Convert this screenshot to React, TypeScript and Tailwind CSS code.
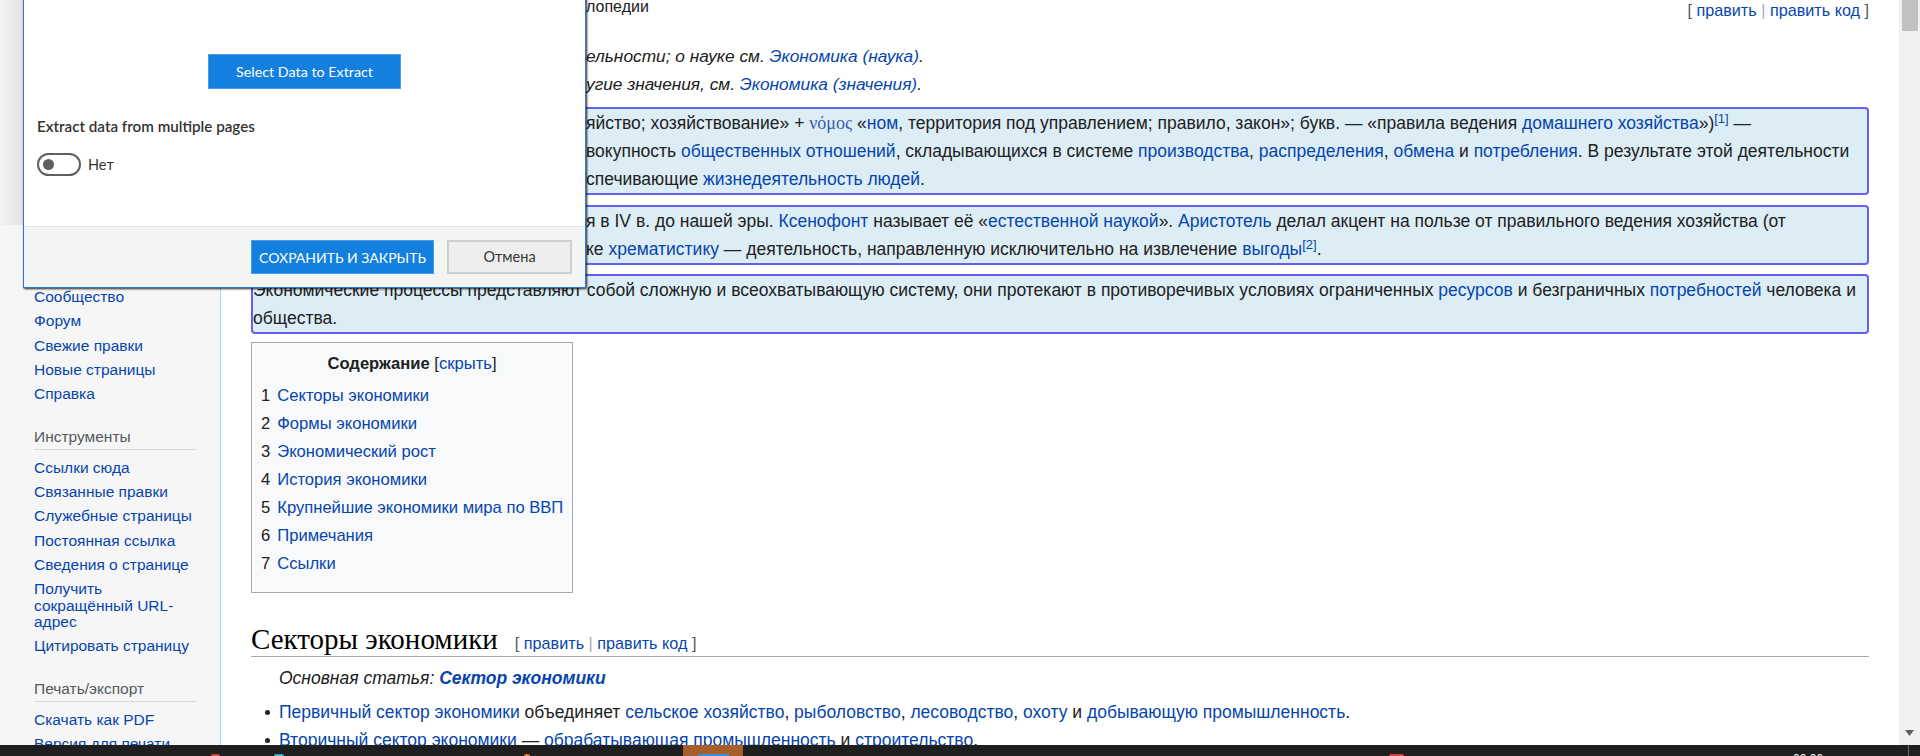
import React from "react";

const L = "text-[#0645ad]";

function Clip({ prefix, w, children }: { prefix: string; w: string; children: React.ReactNode }) {
  return (
    <div className="flex whitespace-nowrap">
      <span className={`${w} shrink-0 overflow-hidden`}>{prefix}</span>
      <span>{children}</span>
    </div>
  );
}

function SideItem({ children }: { children: React.ReactNode }) {
  return <div className="py-[4px] text-[#0645ad]">{children}</div>;
}

function SideHeading({ children }: { children: React.ReactNode }) {
  return (
    <div className="mt-[23px] mb-[6px] border-b border-[#d5d8dc] pb-[3px] text-[#54595d]">{children}</div>
  );
}

function Sidebar() {
  return (
    <aside className="w-[220px] shrink-0 bg-[#f6f6f6] pl-[34px] pr-[23px] pt-[285px] text-[15.5px] leading-[16.3px]">
      <SideItem>Сообщество</SideItem>
      <SideItem>Форум</SideItem>
      <SideItem>Свежие правки</SideItem>
      <SideItem>Новые страницы</SideItem>
      <SideItem>Справка</SideItem>
      <SideHeading>Инструменты</SideHeading>
      <SideItem>Ссылки сюда</SideItem>
      <SideItem>Связанные правки</SideItem>
      <SideItem>Служебные страницы</SideItem>
      <SideItem>Постоянная ссылка</SideItem>
      <SideItem>Сведения о странице</SideItem>
      <SideItem>
        Получить
        <br />
        сокращённый URL-
        <br />
        адрес
      </SideItem>
      <SideItem>Цитировать страницу</SideItem>
      <SideHeading>Печать/экспорт</SideHeading>
      <SideItem>Скачать как PDF</SideItem>
      <SideItem>Версия для печати</SideItem>
    </aside>
  );
}

function EditLinks() {
  return (
    <span className="text-[16.2px] text-[#54595d]">
      [ <span className={L}>править</span> <span className="text-[#a2a9b1]">|</span>{" "}
      <span className={L}>править код</span> ]
    </span>
  );
}

function Content() {
  return (
    <main className="min-w-0 flex-1 border-l border-[#a7d7f9] bg-white px-[30px] text-[17.5px] leading-[28px]">
      <div className="flex h-[20px] items-start justify-between">
        <div className="mt-[-1px] text-[16px] leading-[16px]">
          <Clip prefix="Материал из Википедии — свободной энцик" w="w-[335px]">
            лопедии
          </Clip>
        </div>
        <div className="leading-[20px]">
          <EditLinks />
        </div>
      </div>

      <div className="mt-[22px] pl-[28px] text-[17.3px] italic">
        <Clip prefix="Эта статья — о виде хозяйственной деят" w="w-[307px]">
          ельности; о науке см. <span className={L}>Экономика (наука)</span>.
        </Clip>
        <Clip prefix="У этого термина существуют и др" w="w-[307px]">
          угие значения, см. <span className={L}>Экономика (значения)</span>.
        </Clip>
      </div>

      <div className="mt-[9px] rounded-[4px] border-2 border-[#6262ef] bg-[#ddedf5]">
        <Clip prefix="Эконо́мика (от др.-греч. οἶκος «дом, хозя" w="w-[333px]">
          яйство; хозяйствование» +{" "}
          <span className="font-['Liberation_Serif',serif] text-[18px] text-[#3a5cae]">νόμος</span> «
          <span className={L}>ном</span>, территория под управлением; правило, закон»; букв. — «правила ведения{" "}
          <span className={L}>домашнего хозяйства</span>»)
          <sup className={`${L} text-[13px] leading-none`}>[1]</sup> —
        </Clip>
        <Clip prefix="хозяйственная деятельность общества, а также со" w="w-[333px]">
          вокупность <span className={L}>общественных отношений</span>, складывающихся в системе{" "}
          <span className={L}>производства</span>, <span className={L}>распределения</span>,{" "}
          <span className={L}>обмена</span> и <span className={L}>потребления</span>. В результате этой
          деятельности
        </Clip>
        <Clip prefix="создаются материальные блага и услуги, обе" w="w-[333px]">
          спечивающие <span className={L}>жизнедеятельность людей</span>.
        </Clip>
      </div>

      <div className="mt-[10px] rounded-[4px] border-2 border-[#6262ef] bg-[#ddedf5]">
        <Clip prefix="Термин «экономика» впервые появила" w="w-[333px]">
          я в IV в. до нашей эры. <span className={L}>Ксенофонт</span> называет её «
          <span className={L}>естественной наукой</span>». <span className={L}>Аристотель</span> делал акцент на
          пользе от правильного ведения хозяйства (от
        </Clip>
        <Clip prefix="экономики), отделяя её от практики, а так" w="w-[333px]">
          ке <span className={L}>хрематистику</span> — деятельность, направленную исключительно на извлечение{" "}
          <span className={L}>выгоды</span>
          <sup className={`${L} text-[13px] leading-none`}>[2]</sup>.
        </Clip>
      </div>

      <div className="mt-[9px] whitespace-nowrap rounded-[4px] border-2 border-[#6262ef] bg-[#ddedf5]">
        Экономические процессы представляют собой сложную и всеохватывающую систему, они протекают в
        противоречивых условиях ограниченных <span className={L}>ресурсов</span> и безграничных{" "}
        <span className={L}>потребностей</span> человека и
        <br />
        общества.
      </div>

      <div className="mt-[8px] w-[322px] border border-[#a2a9b1] bg-[#f8f9fa] px-[9px] pt-[7px] pb-[14px]">
        <div className="text-center text-[16.6px]">
          <span className="font-bold">Содержание</span>{" "}
          <span>
            [<span className={L}>скрыть</span>]
          </span>
        </div>
        <div className="mt-[4px] whitespace-nowrap text-[16.6px]">
          {[
            "Секторы экономики",
            "Формы экономики",
            "Экономический рост",
            "История экономики",
            "Крупнейшие экономики мира по ВВП",
            "Примечания",
            "Ссылки",
          ].map((t, i) => (
            <div key={t} className="flex">
              <span className="pr-[7px]">{i + 1}</span>
              <span className={L}>{t}</span>
            </div>
          ))}
        </div>
      </div>

      <div className="mt-[29px] flex h-[35px] items-center border-b border-[#a2a9b1]">
        <span className="font-['Liberation_Serif',serif] text-[29px] leading-[34px] text-[#000]">
          Секторы экономики
        </span>
        <span className="ml-[17px] mt-[8px] leading-[20px]">
          <EditLinks />
        </span>
      </div>

      <div className="mt-[7px] pl-[28px] italic">
        Основная статья: <span className={`${L} font-bold`}>Сектор экономики</span>
      </div>

      <div className="mt-[6px] whitespace-nowrap">
        <div className="flex">
          <span className="mt-[12px] ml-[14px] mr-[9px] h-[5px] w-[5px] shrink-0 rounded-full bg-[#202122]" />
          <span>
            <span className={L}>Первичный сектор экономики</span> объединяет{" "}
            <span className={L}>сельское хозяйство</span>, <span className={L}>рыболовство</span>,{" "}
            <span className={L}>лесоводство</span>, <span className={L}>охоту</span> и{" "}
            <span className={L}>добывающую промышленность</span>.
          </span>
        </div>
        <div className="flex">
          <span className="mt-[12px] ml-[14px] mr-[9px] h-[5px] w-[5px] shrink-0 rounded-full bg-[#202122]" />
          <span>
            <span className={L}>Вторичный сектор экономики</span> —{" "}
            <span className={L}>обрабатывающая промышленность</span> и <span className={L}>строительство</span>.
          </span>
        </div>
      </div>
    </main>
  );
}

function Scrollbar() {
  return (
    <div className="flex w-[21px] shrink-0 flex-col justify-between bg-[#f0f0f0]">
      <div className="ml-[3px] mr-[2px] h-[31px] bg-[#c1c1c1]" />
      <div className="mb-[9px] flex justify-center">
        <svg width="9" height="6" viewBox="0 0 9 6">
          <path d="M0 0 H9 L4.5 6 Z" fill="#606060" />
        </svg>
      </div>
    </div>
  );
}

function Taskbar() {
  return (
    <div className="flex h-[11px] items-end overflow-hidden bg-[#1f1f1f]">
      <span className="ml-[211px] h-[2px] w-[9px] rounded-t-full bg-[#d8403a]" />
      <span className="ml-[54px] h-[2px] w-[10px] rounded-t-full bg-[#2fb3c4]" />
      <span className="ml-[240px] h-[2px] w-[6px] rounded-t-full bg-[#e07b2a]" />
      <span className="ml-[153px] flex h-[11px] w-[60px] items-end justify-center bg-[#a65f2a]">
        <span className="h-[2px] w-[31px] bg-[#3a8fd8]" />
      </span>
      <span className="ml-[646px] h-[2px] w-[15px] rounded-t-full bg-[#d8403a]" />
      <span className="ml-[389px] self-start pt-[8px] font-['Liberation_Sans',sans-serif] text-[12px] leading-[12px] text-white">
        00:06
      </span>
      <span className="ml-[85px] h-[11px] w-px bg-[#6a6a6a]" />
    </div>
  );
}

function Dialog() {
  return (
    <div className="absolute left-[23px] top-[-2px] flex h-[290px] w-[563px] flex-col border border-[#2b7bd6] bg-white font-['Lato',sans-serif] shadow-[1px_1px_2px_rgba(0,0,0,0.85)]">
      <div className="flex flex-1 flex-col px-[13px]">
        <div className="mt-[55px] flex justify-center">
          <button className="h-[35px] w-[193px] border border-[#4a9be8] bg-[#1380e0] text-[14.3px] text-white">
            Select Data to Extract
          </button>
        </div>
        <div className="mt-[28px] text-[15.2px] font-semibold leading-[18px] text-[#333]">
          Extract data from multiple pages
        </div>
        <div className="mt-[18px] flex items-center gap-[7px]">
          <div className="flex h-[23px] w-[44px] items-center rounded-full border-2 border-[#5f5f5f] pl-[4px]">
            <div className="h-[11px] w-[11px] rounded-full bg-[#5f5f5f]" />
          </div>
          <span className="text-[14.5px] text-[#333]">Нет</span>
        </div>
      </div>
      <div className="flex h-[61px] items-center justify-end gap-[13px] border-t border-[#e2e2e2] bg-[#f3f4f4] pr-[13px]">
        <button className="h-[34px] w-[183px] border border-[#4a9be8] bg-[#1380e0] text-[14px] text-white">
          СОХРАНИТЬ И ЗАКРЫТЬ
        </button>
        <button className="h-[34px] w-[125px] border-2 border-[#cfcfcf] bg-[#eeeeee] text-[14.5px] text-[#333]">
          Отмена
        </button>
      </div>
    </div>
  );
}

export default function App() {
  return (
    <div className="relative h-[756px] w-[1920px] overflow-hidden bg-white font-['Liberation_Sans',Arial,sans-serif] text-[#202122]">
      <div className="flex h-[745px] overflow-hidden">
        <Sidebar />
        <Content />
        <Scrollbar />
      </div>
      <Taskbar />
      <div className="absolute left-0 top-0 h-[225px] w-[23px] bg-gradient-to-r from-[#f3f3f3] to-[#e3e3e3]" />
      <Dialog />
    </div>
  );
}
